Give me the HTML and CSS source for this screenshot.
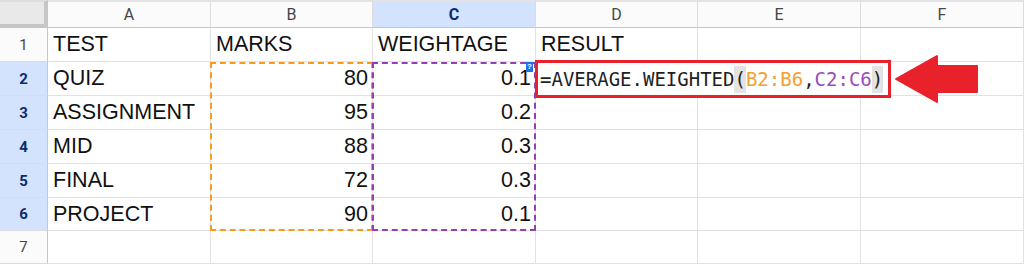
FILE: index.html
```html
<!DOCTYPE html>
<html lang="en">
<head>
    <meta charset="UTF-8">
    <meta name="viewport" content="width=device-width, initial-scale=1.0">
    <title>AVERAGE.WEIGHTED</title>
    <link rel="stylesheet" href="styles.css">
</head>
<body>
    <div class="sheet">
        <!-- column headers -->
        <div class="corner"></div>
        <div class="col-head">A</div>
        <div class="col-head">B</div>
        <div class="col-head sel">C</div>
        <div class="col-head">D</div>
        <div class="col-head">E</div>
        <div class="col-head">F</div>

        <!-- row 1 -->
        <div class="row-head">1</div>
        <div class="cell">TEST</div>
        <div class="cell">MARKS</div>
        <div class="cell">WEIGHTAGE</div>
        <div class="cell">RESULT</div>
        <div class="cell"></div>
        <div class="cell"></div>

        <!-- row 2 -->
        <div class="row-head sel">2</div>
        <div class="cell">QUIZ</div>
        <div class="cell num anchor"><span class="range range-b"></span>80</div>
        <div class="cell num anchor"><span class="range range-c"></span>0.1<span class="badge">?</span></div>
        <div class="cell anchor">
            <div class="editor">=AVERAGE.WEIGHTED<span class="paren">(</span><span class="ref-b">B2:B6</span>,<span class="ref-c">C2:C6</span><span class="paren">)</span></div>
            <svg class="arrow" width="88" height="50" viewBox="0 0 88 50">
                <polygon points="3,25 44,2 44,12 84,12 84,38 44,38 44,48" fill="#e8212b" stroke="#e8212b" stroke-width="2" stroke-linejoin="round"/>
            </svg>
        </div>
        <div class="cell"></div>
        <div class="cell"></div>

        <!-- row 3 -->
        <div class="row-head sel">3</div>
        <div class="cell">ASSIGNMENT</div>
        <div class="cell num">95</div>
        <div class="cell num">0.2</div>
        <div class="cell"></div>
        <div class="cell"></div>
        <div class="cell"></div>

        <!-- row 4 -->
        <div class="row-head sel">4</div>
        <div class="cell">MID</div>
        <div class="cell num">88</div>
        <div class="cell num">0.3</div>
        <div class="cell"></div>
        <div class="cell"></div>
        <div class="cell"></div>

        <!-- row 5 -->
        <div class="row-head sel">5</div>
        <div class="cell">FINAL</div>
        <div class="cell num">72</div>
        <div class="cell num">0.3</div>
        <div class="cell"></div>
        <div class="cell"></div>
        <div class="cell"></div>

        <!-- row 6 -->
        <div class="row-head sel">6</div>
        <div class="cell">PROJECT</div>
        <div class="cell num">90</div>
        <div class="cell num">0.1</div>
        <div class="cell"></div>
        <div class="cell"></div>
        <div class="cell"></div>

        <!-- row 7 -->
        <div class="row-head">7</div>
        <div class="cell"></div>
        <div class="cell"></div>
        <div class="cell"></div>
        <div class="cell"></div>
        <div class="cell"></div>
        <div class="cell"></div>
    </div>
</body>
</html>
```

FILE: styles.css
```css
/* Spreadsheet look */
body {
    margin: 0;
    background-color: #fff;
    font-family: 'Liberation Sans', Arial, sans-serif;
}

.sheet {
    display: grid;
    grid-template-columns: 48px 163px 162px 163px 162px 163px 163px;
    grid-template-rows: 28px repeat(5, 34px) 33px 33px;
}

/* Headers */
.corner {
    background-color: #e9e9e9;
    border-right: 4px solid #c6c6c6;
    border-bottom: 4px solid #c6c6c6;
    border-top: 2px solid #dedede;
}

.col-head {
    display: flex;
    align-items: center;
    justify-content: center;
    background-color: #fbfbfb;
    border-top: 2px solid #e3e3e3;
    border-right: 1px solid #dcdcdc;
    border-bottom: 1px solid #c7c7c7;
    font-family: Roboto, 'Liberation Sans', sans-serif;
    font-size: 16px;
    color: #444746;
}

.row-head {
    display: flex;
    align-items: center;
    justify-content: center;
    background-color: #fbfbfb;
    border-right: 1px solid #c7c7c7;
    border-bottom: 1px solid #dcdcdc;
    font-family: Roboto, 'Liberation Sans', sans-serif;
    font-size: 15px;
    color: #444746;
}

.col-head.sel, .row-head.sel {
    background-color: #d3e3fd;
    color: #0b2c6b;
    font-weight: bold;
}

/* Cells */
.cell {
    display: flex;
    align-items: center;
    padding: 0 5px;
    border-right: 1px solid #e2e2e2;
    border-bottom: 1px solid #e2e2e2;
    font-size: 21.5px;
    color: #111;
    white-space: nowrap;
}

.cell.num {
    justify-content: flex-end;
    padding-right: 4px;
}

.anchor {
    position: relative;
}

/* Dashed range outlines */
.range {
    position: absolute;
    top: 0;
    left: -1px;
    height: 169px;
    box-sizing: border-box;
    z-index: 2;
    pointer-events: none;
}

.range-b {
    width: 163px;
    border: 2px dashed #f79a1e;
}

.range-c {
    width: 164px;
    border: 2px dashed #9440b4;
}

.badge {
    position: absolute;
    top: 0;
    right: 2px;
    width: 7px;
    height: 10px;
    background-color: #1a73e8;
    color: #fff;
    font-size: 8px;
    font-weight: bold;
    line-height: 10px;
    text-align: center;
    z-index: 3;
}

/* Formula being edited */
.editor {
    position: absolute;
    top: -2px;
    left: -1px;
    height: 38px;
    box-sizing: border-box;
    padding: 0 5px 0 2px;
    display: flex;
    align-items: center;
    background-color: #fff;
    border: 3px solid #e8212b;
    font-family: 'DejaVu Sans Mono', 'Liberation Mono', monospace;
    font-size: 19px;
    color: #1f1f1f;
    z-index: 3;
}

.paren {
    display: inline-block;
    line-height: 27px;
    background-color: #e3e3e3;
}

.ref-b {
    color: #f5a02a;
}

.ref-c {
    color: #9a4dbd;
}

.arrow {
    position: absolute;
    top: -8px;
    left: 357px;
    z-index: 3;
}
```
